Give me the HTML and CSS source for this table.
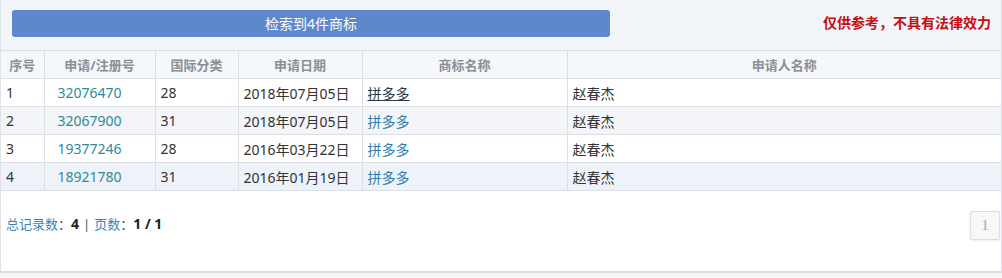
FILE: index.html
```html
<!DOCTYPE html>
<html lang="zh">
<head>
<meta charset="utf-8">
<link rel="stylesheet" href="styles.css">
</head>
<body>
<div class="panel">
  <div class="topbar">
    <div class="result-btn">检索到4件商标</div>
    <div class="notice">仅供参考，不具有法律效力</div>
  </div>
  <table class="grid">
    <colgroup>
      <col class="c1"><col class="c2"><col class="c3"><col class="c4"><col class="c5"><col>
    </colgroup>
    <thead>
      <tr><th>序号</th><th>申请/注册号</th><th>国际分类</th><th>申请日期</th><th>商标名称</th><th>申请人名称</th></tr>
    </thead>
    <tbody>
      <tr><td>1</td><td class="num">32076470</td><td>28</td><td>2018年07月05日</td><td><a class="tm active">拼多多</a></td><td>赵春杰</td></tr>
      <tr class="alt"><td>2</td><td class="num">32067900</td><td>31</td><td>2018年07月05日</td><td><a class="tm">拼多多</a></td><td>赵春杰</td></tr>
      <tr><td>3</td><td class="num">19377246</td><td>28</td><td>2016年03月22日</td><td><a class="tm">拼多多</a></td><td>赵春杰</td></tr>
      <tr class="alt2"><td>4</td><td class="num">18921780</td><td>31</td><td>2016年01月19日</td><td><a class="tm">拼多多</a></td><td>赵春杰</td></tr>
    </tbody>
  </table>
  <div class="footer">
    <div class="summary"><span class="lbl">总记录数</span><span class="colon">：</span><b>4</b><span class="sep">|</span><span class="lbl">页数</span><span class="colon">：</span><b>1 / 1</b></div>
    <div class="pager"><span class="page">1</span></div>
  </div>
</div>
<div class="bottom"></div>
</body>
</html>
```

FILE: styles.css
```css
html, body {
  margin: 0;
  padding: 0;
  background: #ffffff;
  font-family: "Noto Sans", "Noto Sans CJK SC", sans-serif;
}
.panel {
  border-left: 1px solid #dfe3e8;
  border-right: 1px solid #dfe3e8;
  width: 1000px;
}
.topbar {
  background: #f2f5f9;
  height: 50px;
  box-sizing: border-box;
  padding: 10px 10px 0 11px;
  display: flex;
  align-items: flex-start;
  justify-content: space-between;
}
.result-btn {
  width: 598px;
  height: 27px;
  background: #5d88c9;
  border-radius: 3px;
  color: #ffffff;
  font-size: 14px;
  line-height: 27px;
  text-align: center;
}
.notice {
  color: #c41010;
  font-weight: bold;
  font-size: 14px;
  line-height: 20px;
  margin-top: 3px;
}
.grid {
  width: 1000px;
  border-collapse: collapse;
  table-layout: fixed;
  font-size: 14px;
}
.c1 { width: 43px; }
.c2 { width: 111px; }
.c3 { width: 83px; }
.c4 { width: 124px; }
.c5 { width: 205px; }
.grid th, .grid td {
  border: 1px solid #dcdfe4;
  height: 28px;
  padding: 0 5px;
  box-sizing: border-box;
  white-space: nowrap;
  overflow: hidden;
}
.grid tr > :first-child { border-left: none; }
.grid tr > :last-child { border-right: none; }
.grid th {
  background: #f5f8fb;
  color: #8a8f96;
  font-size: 13px;
  font-weight: bold;
  text-align: center;
}
.grid td {
  color: #333333;
  text-align: left;
}
.grid tr.alt td { background: #f4f5f8; }
.grid tr.alt2 td { background: #eef3fa; }
.grid td.num { color: #2f8a9c; padding-left: 13px; }
.tm {
  color: #2f7fae;
  text-decoration: none;
}
.tm.active {
  color: #2b3a48;
  text-decoration: underline;
}
.footer {
  height: 80px;
  display: flex;
  justify-content: space-between;
  align-items: flex-start;
  padding: 0 0 0 5px;
}
.summary {
  margin-top: 24px;
  font-size: 13px;
  line-height: 18px;
  color: #222;
}
.summary .lbl { color: #3a84b5; }
.summary .colon { color: #555; }
.summary b { font-weight: bold; font-size: 14px; }
.summary .sep { color: #555; margin: 0 4px; }
.pager { margin-top: 20px; margin-right: 1px; }
.page {
  display: block;
  width: 30px;
  height: 29px;
  box-sizing: border-box;
  border: 1px solid #dedede;
  background: #f7f7f7;
  border-radius: 2px;
  box-shadow: 0 1px 2px rgba(0,0,0,0.08);
  color: #aaaaaa;
  font-family: "Liberation Serif", serif;
  font-size: 15px;
  line-height: 27px;
  text-align: center;
}
.bottom {
  border-top: 2px solid #dcdcdc;
  height: 6px;
  background: #f6f6f6;
}
```
